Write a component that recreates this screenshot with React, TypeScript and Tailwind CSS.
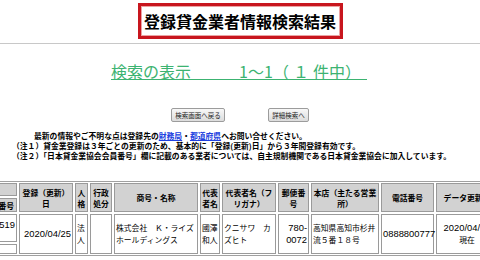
import React from "react";

const cols = "grid-cols-[96px_54px_13px_22px_84px_20px_54px_31px_68px_53px_62px]";

function H({ children, className = "" }: { children?: React.ReactNode; className?: string }) {
  return (
    <div
      className={`row-span-2 bg-[#d2d2d2] border border-[#9a9a9a] flex items-center justify-center text-center font-bold text-[7.8px] leading-[11px] px-[1px] ${className}`}
    >
      <div>{children}</div>
    </div>
  );
}

function D({ children, className = "" }: { children?: React.ReactNode; className?: string }) {
  return (
    <div
      className={`row-span-2 bg-white border border-[#9a9a9a] flex items-center text-[7.8px] leading-[12px] px-[1px] ${className}`}
    >
      <div className="w-full">{children}</div>
    </div>
  );
}

const N = ({ children }: { children: React.ReactNode }) => (
  <span className="font-['Liberation_Sans','Noto_Sans_CJK_JP',sans-serif] text-[9.4px]">{children}</span>
);

export default function App() {
  return (
    <div className="w-[480px] h-[260px] overflow-hidden bg-white text-black font-['Noto_Sans_CJK_JP',sans-serif]">
      <div className="pt-[3px] flex justify-center">
        <div className="w-[205px] h-[36px] border-[3px] border-[#c8161e]">
          <div className="h-full border border-[#eba3a3] flex items-center justify-center text-[16px] font-bold leading-none">
            登録貸金業者情報検索結果
          </div>
        </div>
      </div>
      <div className="mt-[4px] h-[1px] bg-[#c8c8c8]" />
      <div className="mt-[19px] flex justify-center">
        <div className="ml-[-2px] w-[256px] flex border-b border-[#3cb371] text-[16px] leading-[16px] text-[#3cb371] whitespace-pre">
          <span className="w-[128px]">検索の表示</span>
          <span className="w-[34px]">1～1</span>
          <span className="w-[16px]">（</span>
          <span className="w-[24px] text-center">１</span>
          <span>件中）</span>
        </div>
      </div>
      <div className="mt-[28px] flex justify-center gap-[43px]">
        <button className="w-[54px] h-[14px] rounded-[2px] border border-[#9c9c9c] bg-gradient-to-b from-[#f8f8f8] to-[#dcdcdc] text-[6.5px] leading-none text-[#222] flex items-center justify-center">
          検索画面へ戻る
        </button>
        <button className="w-[41px] h-[14px] rounded-[2px] border border-[#9c9c9c] bg-gradient-to-b from-[#f8f8f8] to-[#dcdcdc] text-[6.5px] leading-none text-[#222] flex items-center justify-center">
          詳細検索へ
        </button>
      </div>
      <div className="mt-[9px] text-[7.8px] leading-[10px] font-bold whitespace-nowrap">
        <div className="pl-[34px]">
          最新の情報やご不明な点は登録先の
          <span className="text-[#2040e0] underline">財務局</span>・
          <span className="text-[#2040e0] underline">都道府県</span>
          へお問い合せください。
        </div>
        <div className="pl-[12px]">（注１）貸金業登録は３年ごとの更新のため、基本的に「登録(更新)日」から３年間登録有効です。</div>
        <div className="pl-[12px]">（注２）「日本貸金業協会会員番号」欄に記載のある業者については、自主規制機関である日本貸金業協会に加入しています。</div>
      </div>
      <div className="mt-[20px] ml-[-81px] w-max border border-[#a0a0a0] p-[1px]">
        <div className={`grid ${cols} grid-rows-[13px_14px_28px_10px] gap-[2px]`}>
          <div className="bg-[#d2d2d2] border border-[#9a9a9a] flex items-center justify-center font-bold text-[7.8px] leading-[11px]">登録番号</div>
          <H>登録（更新）日</H>
          <H>人格</H>
          <H>行政処分</H>
          <H>商号・名称</H>
          <H>代表者名</H>
          <H>代表者名（フリガナ）</H>
          <H>郵便番号</H>
          <H>本店（主たる営業所）</H>
          <H>電話番号</H>
          <H>データ更新日</H>
          <div className="bg-[#d2d2d2] border border-[#9a9a9a] flex items-center justify-end pr-[2px] font-bold text-[7.8px] leading-[11px] whitespace-nowrap">日本貸金業協会会員番号</div>

          <div className="bg-white border border-[#9a9a9a] text-right pr-[1px] leading-[12px]">
            <N>01519</N>
          </div>
          <D className="text-right">
            <N>2020/04/25</N>
          </D>
          <D>法人</D>
          <D> </D>
          <D>株式会社　Ｋ・ライズホールディングス</D>
          <D>國澤和人</D>
          <D>クニサワ　カズヒト</D>
          <D className="text-right">
            <N>780-0072</N>
          </D>
          <D>高知県高知市杉井流５番１８号</D>
          <D className="whitespace-nowrap">
            <N>0888800777</N>
          </D>
          <D className="text-center">
            <N>2020/04/25</N>
            <br />
            現在
          </D>
          <div className="bg-white border border-[#9a9a9a]" />
        </div>
      </div>
    </div>
  );
}
